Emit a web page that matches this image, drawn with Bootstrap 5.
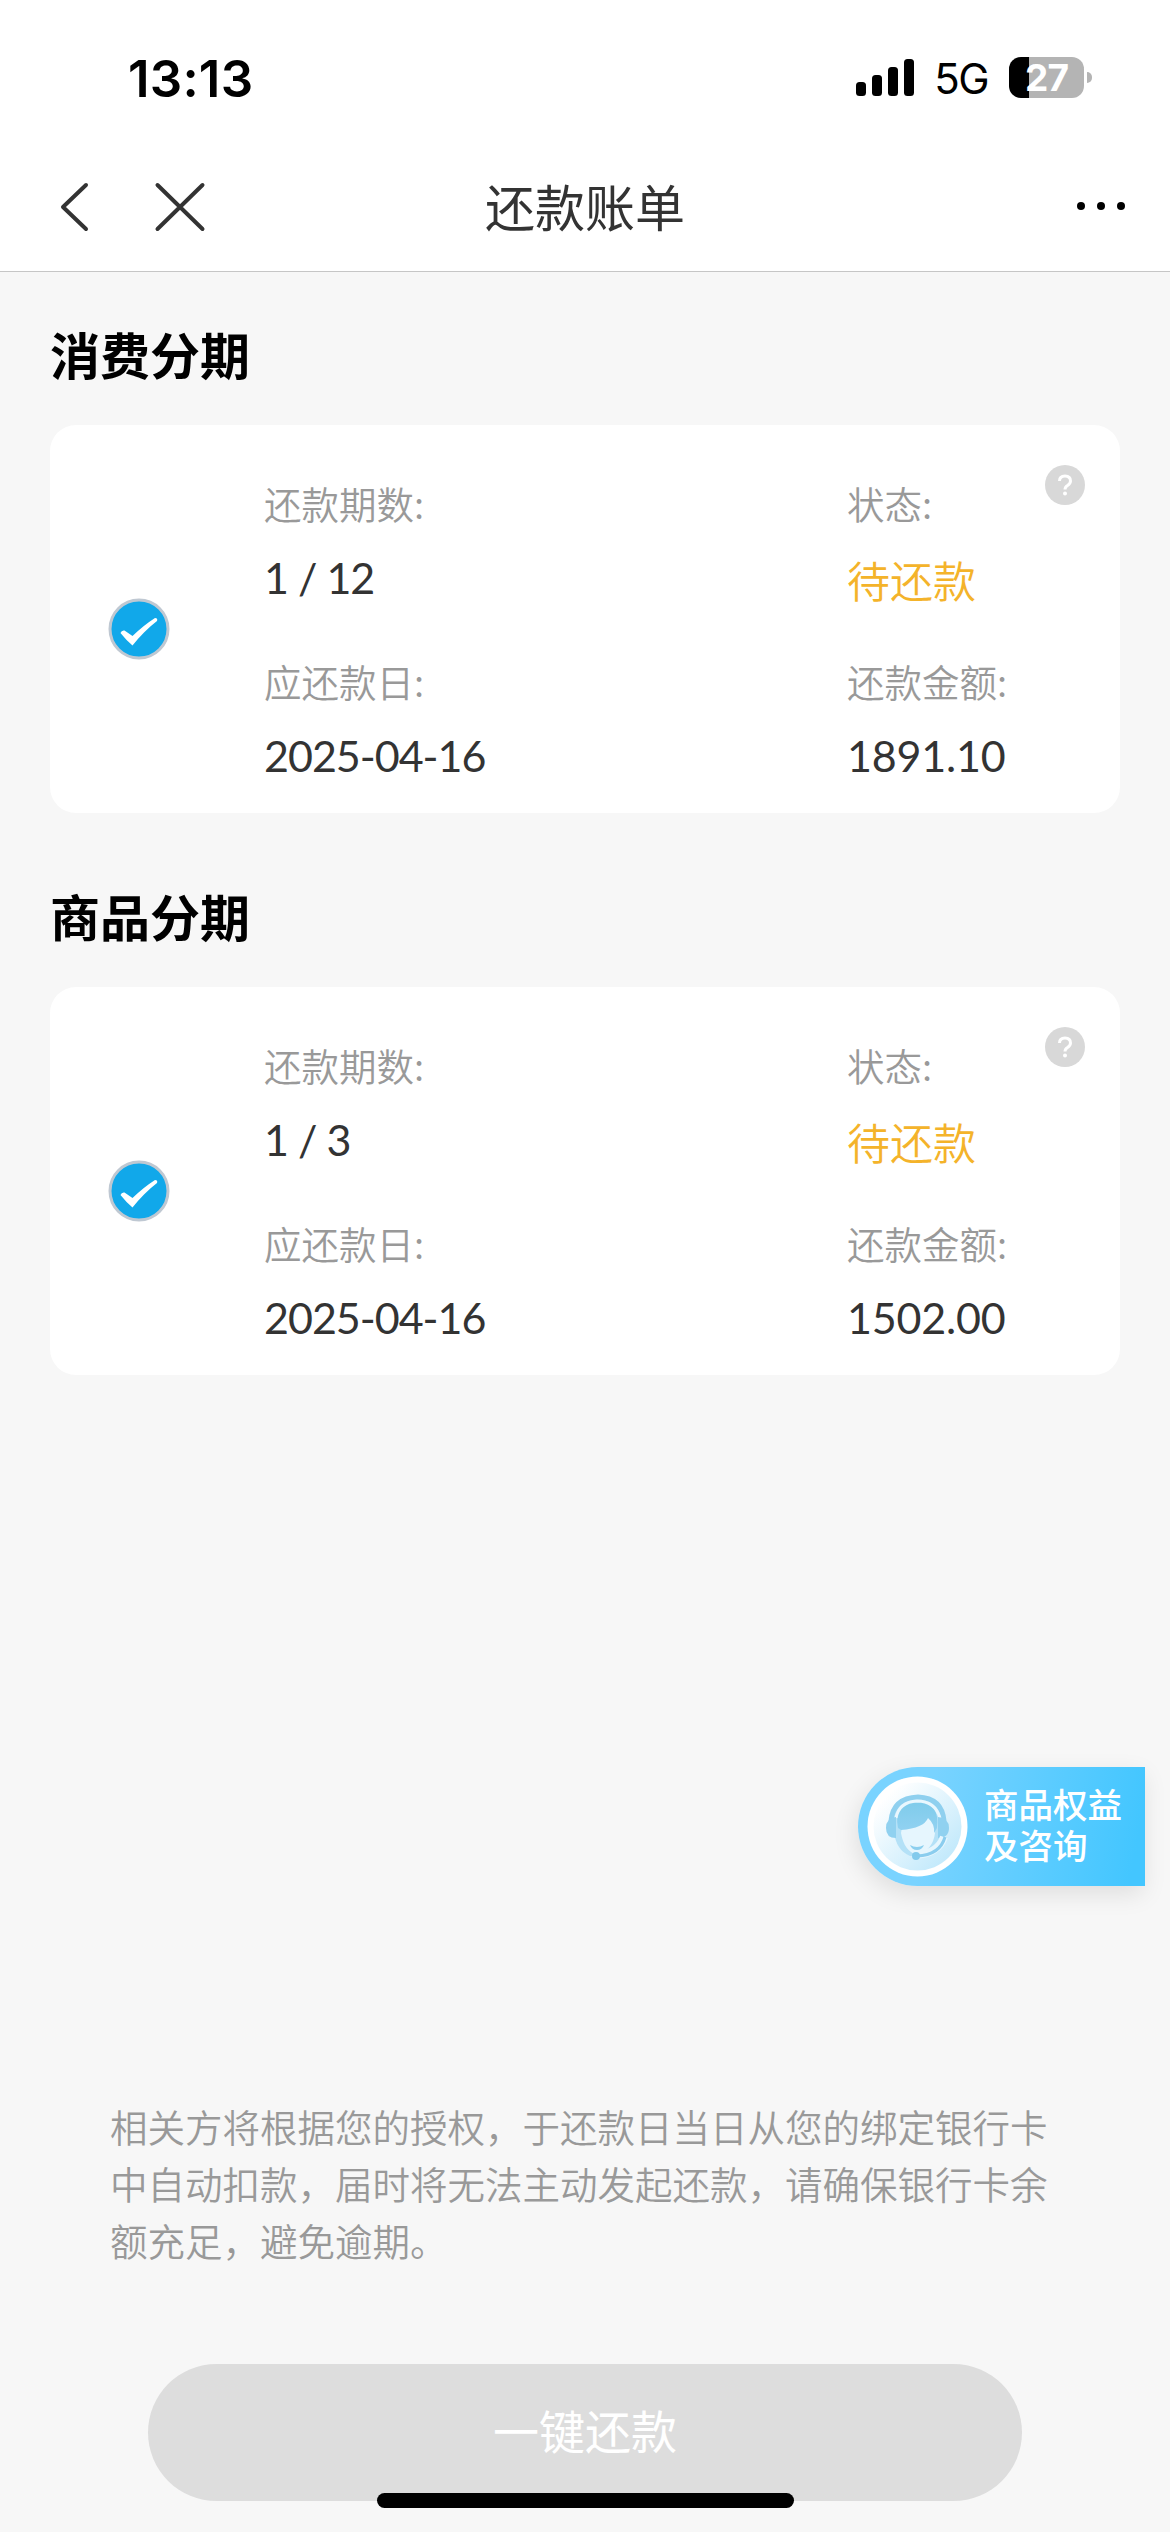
<!DOCTYPE html>
<html lang="zh-CN">
<head>
<meta charset="utf-8">
<meta name="viewport" content="width=device-width, initial-scale=1">
<title>还款账单</title>
<link href="https://cdn.jsdelivr.net/npm/bootstrap@5.3.0/dist/css/bootstrap.min.css" rel="stylesheet">
<style>
  body { font-family: "Noto Sans CJK SC", sans-serif; background: #f7f7f7; color: #333; }
  .screen { width: 1170px; height: 2532px; overflow: hidden; }
  .status { height: 150px; padding: 51px 78px 0 128px; font-family: Inter, sans-serif; color: #000; }
  .clock { font-size: 51px; font-weight: 600; line-height: 56px; letter-spacing: .2px; }
  .net { font-size: 42px; line-height: 54px; margin: 1px 21px 0 20px; letter-spacing: -1.5px; }
  .cell { width: 83px; height: 41px; margin-top: 6px; }
  .cell-body { width: 75px; height: 41px; border-radius: 12px; background: linear-gradient(90deg, #000 20px, #b4b4b4 20px); color: #fff; font-size: 37px; font-weight: 700; line-height: 41px; letter-spacing: -1px; }
  .cell-nub { width: 5px; height: 11px; margin-left: 3px; border-radius: 0 5px 5px 0; background: #b4b4b4; }
  .title-bar { height: 122px; padding: 0 44px 8px 58px; border-bottom: 1px solid #c6c6c6; }
  .title-side { width: 180px; }
  .title-text { font-size: 50px; line-height: 60px; padding: 0 14px 3px 0; margin: 0; font-weight: 400; color: #333; }
  .bills { padding: 0 50px; }
  .sect { font-size: 50px; line-height: 60px; font-weight: 700; color: #000; margin: 51px 0 42px; }
  .bill { height: 388px; border-radius: 26px; background: #fff; }
  .bill + .sect { margin: 72px 0 42px; }
  .pick { width: 214px; padding: 20px 0 0 58px; }
  .col-left { width: 583px; }
  .pair + .pair { margin-top: 44px; }
  .lab { font-size: 37.5px; line-height: 60px; color: #999; font-weight: 350; }
  .val { font-family: Lato, "Noto Sans CJK SC", sans-serif; font-size: 43px; line-height: 62px; margin: 14px 0 -2px; letter-spacing: -.2px; white-space: pre; color: #333; }
  .col-left .val { letter-spacing: -1px; }
  .val.due { font-family: "Noto Sans CJK SC", sans-serif; font-weight: 350; color: #f4b32a; letter-spacing: 0; line-height: 64px; margin-bottom: -4px; }
  .help { top: 40px; right: 35px; }
  .service { left: 858px; top: 1767px; width: 287px; height: 119px; border-radius: 60px 0 0 60px; padding-left: 9px;
    background: linear-gradient(100deg, #79d3ff 25%, #43c6ff 95%); box-shadow: -2px 8px 24px rgba(0,0,0,.1);
    color: #fff; font-size: 34.5px; font-weight: 500; line-height: 40.5px; }
  .service svg { margin-right: 16px; }
  .service-label { padding-bottom: 6px; }
  .foot { padding: 0 110px 31px; }
  .notice { font-size: 37.5px; line-height: 57px; color: #999; font-weight: 350; width: 940px; margin-bottom: 96px; }
  .pay, .pay:disabled { width: 874px; height: 137px; border: 0; background: #ddd; color: #fff; opacity: 1; font-size: 46px; padding: 0 0 6px; }
  .home { left: 377px; top: 2493px; width: 417px; height: 15px; background: #000; }
</style>
</head>
<body>
<main class="screen d-flex flex-column position-relative">
  <header class="bg-white">
    <div class="status d-flex align-items-start">
      <span class="clock me-auto">13:13</span>
      <svg class="mt-2" width="58" height="38" viewBox="0 0 58 38"><rect y="23" width="10" height="14" rx="3.5"/><rect x="16" y="16" width="10" height="21" rx="3.5"/><rect x="32" y="8" width="10" height="29" rx="3.5"/><rect x="48" width="10" height="37" rx="3.5"/></svg>
      <span class="net">5G</span>
      <div class="cell d-flex align-items-center"><div class="cell-body text-center">27</div><div class="cell-nub"></div></div>
    </div>
    <nav class="title-bar d-flex align-items-center justify-content-between">
      <div class="title-side">
        <svg width="150" height="54" viewBox="0 0 150 54" fill="none" stroke="#333" stroke-width="4" stroke-linecap="round" stroke-linejoin="round"><path d="M28 5 5 27l23 22"/><path d="m99.500 5 45 44m0-44-45 44"/></svg>
      </div>
      <h1 class="title-text">还款账单</h1>
      <div class="title-side d-flex justify-content-end">
        <svg width="50" height="20" viewBox="0 0 50 20"><circle cx="5" cy="9" r="4"/><circle cx="25" cy="9" r="4"/><circle cx="45" cy="9" r="4"/></svg>
      </div>
    </nav>
  </header>

  <section class="bills">
    <h2 class="sect">消费分期</h2>
    <article class="bill d-flex position-relative">
      <div class="pick d-flex align-items-center">
        <svg width="62" height="62" viewBox="0 0 62 62"><circle cx="31" cy="31" r="29" fill="#11a8ea" stroke="#bfc8d2" stroke-width="3"/><path d="M12.500 35q1-3 4-2.500l8 5.500Q36 27 47 20q3 0 2 3-13 10-24.500 24.500Q18 42 12.500 35z" fill="#fff"/></svg>
      </div>
      <div class="col-left pt-5">
        <div class="pair"><div class="lab">还款期数:</div><div class="val">1 / 12</div></div>
        <div class="pair"><div class="lab">应还款日:</div><div class="val">2025-04-16</div></div>
      </div>
      <div class="pt-5">
        <div class="pair"><div class="lab">状态:</div><div class="val due">待还款</div></div>
        <div class="pair"><div class="lab">还款金额:</div><div class="val">1891.10</div></div>
      </div>
      <svg class="help position-absolute" width="40" height="40" viewBox="0 0 40 40"><circle cx="20" cy="20" r="20" fill="#d8d8d8"/><path d="M14.500 16q0-5 5.500-5t5.500 5q0 2.500-3 4.500-2.500 1.500-2.500 4" fill="none" stroke="#fff" stroke-width="3"/><circle cx="20" cy="28.500" r="2" fill="#fff"/></svg>
    </article>

    <h2 class="sect">商品分期</h2>
    <article class="bill d-flex position-relative">
      <div class="pick d-flex align-items-center">
        <svg width="62" height="62" viewBox="0 0 62 62"><circle cx="31" cy="31" r="29" fill="#11a8ea" stroke="#bfc8d2" stroke-width="3"/><path d="M12.500 35q1-3 4-2.500l8 5.500Q36 27 47 20q3 0 2 3-13 10-24.500 24.500Q18 42 12.500 35z" fill="#fff"/></svg>
      </div>
      <div class="col-left pt-5">
        <div class="pair"><div class="lab">还款期数:</div><div class="val">1 / 3</div></div>
        <div class="pair"><div class="lab">应还款日:</div><div class="val">2025-04-16</div></div>
      </div>
      <div class="pt-5">
        <div class="pair"><div class="lab">状态:</div><div class="val due">待还款</div></div>
        <div class="pair"><div class="lab">还款金额:</div><div class="val">1502.00</div></div>
      </div>
      <svg class="help position-absolute" width="40" height="40" viewBox="0 0 40 40"><circle cx="20" cy="20" r="20" fill="#d8d8d8"/><path d="M14.500 16q0-5 5.500-5t5.500 5q0 2.500-3 4.500-2.500 1.500-2.500 4" fill="none" stroke="#fff" stroke-width="3"/><circle cx="20" cy="28.500" r="2" fill="#fff"/></svg>
    </article>
  </section>

  <a class="service position-absolute d-flex align-items-center text-decoration-none">
    <svg width="101" height="101" viewBox="0 0 101 101">
      <defs>
        <linearGradient id="disc" x1="0" y1="0" x2="1" y2="1"><stop offset=".15" stop-color="#fff"/><stop offset=".9" stop-color="#bfe8fb"/></linearGradient>
        <linearGradient id="hair" x1="0" y1="0" x2="0" y2="1"><stop offset="0" stop-color="#7ecbea"/><stop offset="1" stop-color="#92d2f2"/></linearGradient>
      </defs>
      <circle cx="50.500" cy="50.500" r="50" fill="#fff"/>
      <circle cx="50.500" cy="50.500" r="44" fill="url(#disc)"/>
      <path d="M27 42q0-19 24-21 24 2 25 21l-2 16q-4 17-16 22H43q-14-6-16-24z" fill="#b4e1f7"/>
      <path d="M34 57q0-6 6-7 19-1 22-11 6 9 6 18-2 17-18 22-13-4-16-22z" fill="#e6f6fe"/>
      <path d="M31 52q-5-27 19-28 23 2 20 28l-3 5q1-9-6-15-4 10-27 12z" fill="url(#hair)"/>
      <path d="M24 45q2-23 27-24 24 1 26 24" fill="none" stroke="#8fd0ef" stroke-width="5"/>
      <path d="M29 42q3-16 21-17 18 0 23 17" fill="none" stroke="#e9f7fe" stroke-width="3"/>
      <path d="M29 41v21q-10 0-10-10t10-11zM71 41v21q11 0 11-10t-11-11z" fill="#90d1f0"/>
      <path d="M43 69q7 4 14 0-2 5-7 5t-7-5z" fill="#8ccfef"/>
      <path d="M77 61q-6 17-29 18" fill="none" stroke="#e6f6fe" stroke-width="8"/>
      <path d="M78 61q-5 18-28 19" fill="none" stroke="#8bcdee" stroke-width="3"/>
      <circle cx="49" cy="80" r="4" fill="#83caec"/>
    </svg>
    <span class="service-label d-flex flex-column"><span>商品权益</span><span>及咨询</span></span>
  </a>

  <footer class="foot mt-auto">
    <p class="notice">相关方将根据您的授权，于还款日当日从您的绑定银行卡中自动扣款，届时将无法主动发起还款，请确保银行卡余额充足，避免逾期。</p>
    <button class="pay btn rounded-pill d-block mx-auto" disabled>一键还款</button>
  </footer>
  <div class="home position-absolute rounded-pill"></div>
</main>
<script src="https://cdn.jsdelivr.net/npm/bootstrap@5.3.0/dist/js/bootstrap.bundle.min.js"></script>
</body>
</html>
